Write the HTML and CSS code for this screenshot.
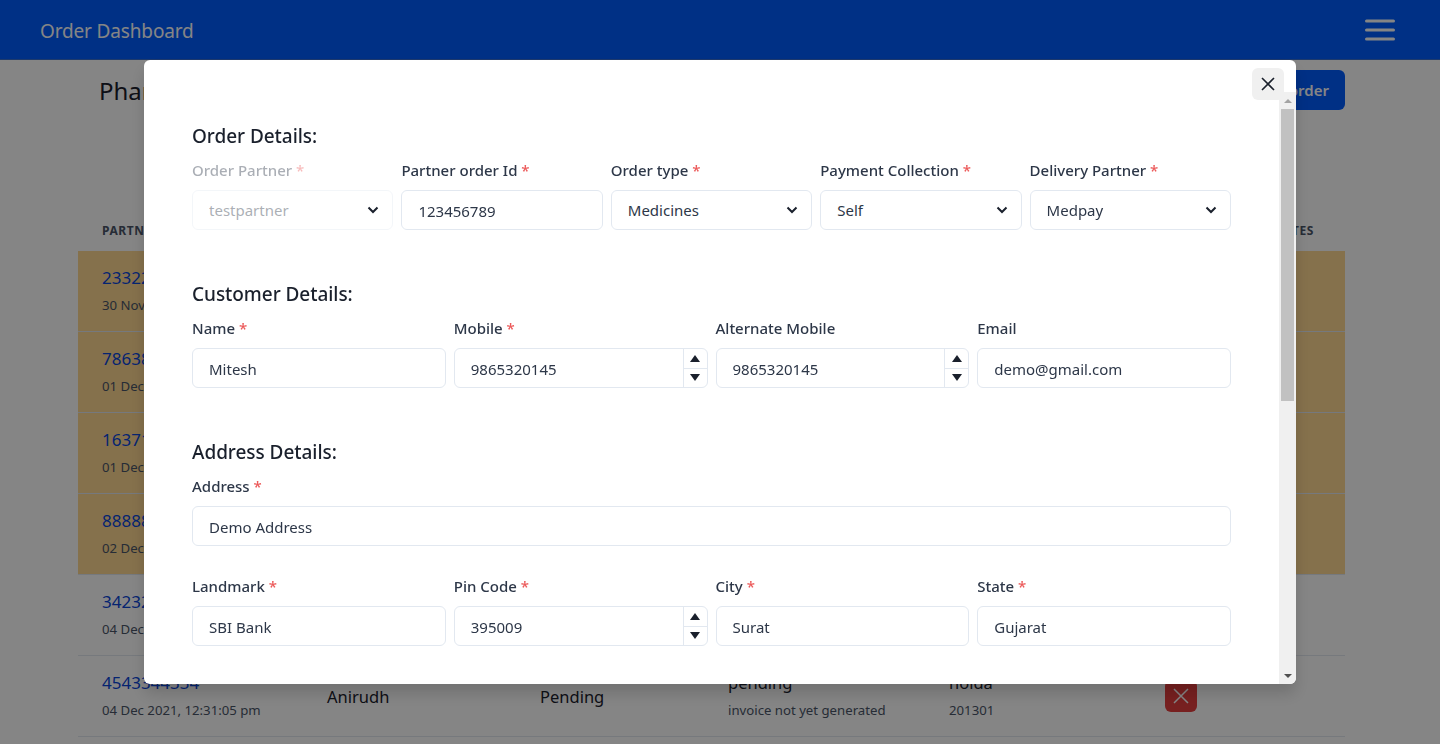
FILE: index.html
```html
<!DOCTYPE html>
<html>
<head>
<meta charset="utf-8">
<title>Order Dashboard</title>
<link rel="stylesheet" href="styles.css">
</head>
<body>
<header class="nav">
	<a class="brand">Order Dashboard</a>
	<svg class="burger" width="30" height="24" viewBox="0 0 30 24"><path d="M1.5 3h27M1.5 12h27M1.5 21h27" stroke="#fff" stroke-width="3" stroke-linecap="round"/></svg>
</header>
<main class="page">
	<div class="page-top">
		<h1>Pharmacy Orders</h1>
		<button class="create">Create order</button>
	</div>
	<div class="orders">
		<div class="row head"><span>PARTNER ORDER ID</span><span>CUSTOMER</span><span>STATUS</span><span>INVOICE</span><span>CITY</span><span>ACTION</span><span>UPDATES</span></div>
		<div class="row late"><div class="two"><a>2332211445</a><small>30 Nov 2021</small></div></div>
		<div class="row late"><div class="two"><a>7863812345</a><small>01 Dec 2021</small></div></div>
		<div class="row late"><div class="two"><a>1637100221</a><small>01 Dec 2021</small></div></div>
		<div class="row late"><div class="two"><a>8888812121</a><small>02 Dec 2021</small></div></div>
		<div class="row"><div class="two"><a>3423234234</a><small>04 Dec 2021</small></div></div>
		<div class="row">
			<div class="two"><a>4543344334</a><small>04 Dec 2021, 12:31:05 pm</small></div>
			<div><p>Anirudh</p></div>
			<div><p>Pending</p></div>
			<div class="two"><p>pending</p><small>invoice not yet generated</small></div>
			<div class="two"><p>noida</p><small>201301</small></div>
			<div><button class="cancel"><svg width="16" height="16" viewBox="0 0 16 16"><path d="M1 1l14 14M15 1L1 15" stroke="#fff" stroke-width="1.5"/></svg></button></div>
		</div>
	</div>
</main>
<div class="backdrop"></div>
<section class="modal">
	<button class="close"><svg width="14" height="14" viewBox="0 0 14 14"><path d="M1 1l12 12M13 1L1 13" stroke="#1a202c" stroke-width="1.6"/></svg></button>
	<div class="modal-body">
		<h2>Order Details:</h2>
		<div class="fields five">
			<div class="field off">
				<label>Order Partner <i>*</i></label>
				<div class="pick"><select disabled><option>testpartner</option></select><svg width="12" height="8" viewBox="0 0 12 8"><path d="M1.5 1.5L6 6l4.5-4.5" fill="none" stroke="#1a202c" stroke-width="2"/></svg></div>
			</div>
			<div class="field">
				<label>Partner order Id <i>*</i></label>
				<input type="text" value="123456789">
			</div>
			<div class="field">
				<label>Order type <i>*</i></label>
				<div class="pick"><select><option>Medicines</option></select><svg width="12" height="8" viewBox="0 0 12 8"><path d="M1.5 1.5L6 6l4.5-4.5" fill="none" stroke="#1a202c" stroke-width="2"/></svg></div>
			</div>
			<div class="field">
				<label>Payment Collection <i>*</i></label>
				<div class="pick"><select><option>Self</option></select><svg width="12" height="8" viewBox="0 0 12 8"><path d="M1.5 1.5L6 6l4.5-4.5" fill="none" stroke="#1a202c" stroke-width="2"/></svg></div>
			</div>
			<div class="field">
				<label>Delivery Partner <i>*</i></label>
				<div class="pick"><select><option>Medpay</option></select><svg width="12" height="8" viewBox="0 0 12 8"><path d="M1.5 1.5L6 6l4.5-4.5" fill="none" stroke="#1a202c" stroke-width="2"/></svg></div>
			</div>
		</div>

		<h2>Customer Details:</h2>
		<div class="fields four">
			<div class="field">
				<label>Name <i>*</i></label>
				<input type="text" value="Mitesh">
			</div>
			<div class="field">
				<label>Mobile <i>*</i></label>
				<div class="num"><input type="text" value="9865320145"><div class="steps"><b class="up"></b><b class="down"></b></div></div>
			</div>
			<div class="field">
				<label>Alternate Mobile</label>
				<div class="num"><input type="text" value="9865320145"><div class="steps"><b class="up"></b><b class="down"></b></div></div>
			</div>
			<div class="field">
				<label>Email</label>
				<input type="text" value="demo@gmail.com">
			</div>
		</div>

		<h2>Address Details:</h2>
		<div class="field wide">
			<label>Address <i>*</i></label>
			<input type="text" value="Demo Address">
		</div>
		<div class="fields four">
			<div class="field">
				<label>Landmark <i>*</i></label>
				<input type="text" value="SBI Bank">
			</div>
			<div class="field">
				<label>Pin Code <i>*</i></label>
				<div class="num"><input type="text" value="395009"><div class="steps"><b class="up"></b><b class="down"></b></div></div>
			</div>
			<div class="field">
				<label>City <i>*</i></label>
				<input type="text" value="Surat">
			</div>
			<div class="field">
				<label>State <i>*</i></label>
				<input type="text" value="Gujarat">
			</div>
		</div>
	</div>
	<div class="bar"><u class="arrow-up"></u><span class="thumb"></span><u class="arrow-down"></u></div>
</section>
</body>
</html>
```
FILE: styles.css
```css
*{box-sizing:border-box;margin:0;padding:0;}
html,body{height:744px;overflow:hidden;}
body{background:#fff;color:#1a202c;font-family:"Noto Sans","Open Sans",sans-serif;font-size:16px;}
button{font-family:inherit;border:0;}

.nav{height:60px;background:#005cff;display:flex;align-items:center;justify-content:space-between;padding:0 45px 0 40px;border-bottom:1px solid #3a6fd0;}
.brand{color:#fff;font-size:19px;letter-spacing:-.15px;margin-top:2px;}
.burger{display:block;}

.page{padding:10px 95px 0 78px;}
.page-top{display:flex;justify-content:space-between;align-items:center;height:40px;padding-left:21px;}
.page-top h1{font-size:24px;font-weight:400;}
.create{height:40px;padding:0 16px;background:#005cff;color:#fff;font-size:15px;font-weight:600;border-radius:6px;}

.orders{margin-top:101px;}
.row{display:grid;grid-template-columns:225px 213px 188px 221px 216px 92px 1fr;height:81px;padding:0 24px;border-bottom:1px solid #e2e8f0;align-items:center;}
.row a{display:block;color:#0a46d8;font-size:17px;line-height:27px;}
.row p{font-size:16.5px;line-height:27px;}
.row small{display:block;color:#4a5568;font-size:13.2px;line-height:20px;margin-top:4px;}
.two{margin-bottom:4px;}
.head{height:40px;font-size:12px;font-weight:700;letter-spacing:.6px;color:#4a5568;white-space:nowrap;align-items:start;padding-top:11px;border-bottom:0;}
.late{background:#ffd892;}
.cancel{width:32px;height:32px;background:#e53e3e;border-radius:6px;display:flex;align-items:center;justify-content:center;}

.backdrop{position:fixed;top:0;left:0;width:1440px;height:744px;background:rgba(0,0,0,.48);}

.modal{position:fixed;top:60px;left:144px;width:1152px;height:624px;background:#fff;border-radius:6px;overflow:hidden;box-shadow:0 10px 15px rgba(0,0,0,.15);}
.close{position:absolute;top:8px;right:12px;width:32px;height:32px;background:#f0f0f0;border-radius:6px;display:flex;align-items:center;justify-content:center;z-index:2;}
.modal-body{padding:64px 65px 0 48px;}
h2{font-size:19px;font-weight:500;line-height:24px;margin-bottom:10px;letter-spacing:-.05px;}

.fields{display:grid;gap:8px;}
.five{grid-template-columns:repeat(5,1fr);margin-bottom:52px;}
.four{grid-template-columns:repeat(4,1fr);margin-bottom:52px;}
.wide{margin-bottom:28px;}
.field label{display:block;font-size:15px;font-weight:500;line-height:24px;margin-bottom:8px;color:#2d3748;}
.field label i{color:#ec5a5a;font-style:normal;}
.off label,.off select{opacity:.4;}

input,select{width:100%;height:40px;border:1px solid #e2e8f0;border-radius:6px;padding:0 16px;background:#fff;color:#2d3748;font:15px "Noto Sans","Open Sans",sans-serif;appearance:none;outline:0;}
input{padding-top:2px;}
.pick{position:relative;}
.pick svg{position:absolute;right:14px;top:16px;}
.num{position:relative;}
.steps{position:absolute;top:1px;right:1px;bottom:1px;width:24px;border-left:1px solid #e2e8f0;display:flex;flex-direction:column;}
.steps b{flex:1;display:flex;align-items:center;justify-content:center;}
.steps b:first-child{border-bottom:1px solid #e2e8f0;}
.steps b:after{content:"";border-left:5.5px solid transparent;border-right:5.5px solid transparent;}
.up:after{border-bottom:7px solid #1a202c;}
.down:after{border-top:7px solid #1a202c;}

.bar{position:absolute;top:32px;right:0;bottom:0;width:17px;background:#f0f0f0;display:flex;flex-direction:column;align-items:center;}
.thumb{width:13px;height:292px;background:#c1c1c1;margin-top:6px;}
.arrow-up,.arrow-down{border-left:4px solid transparent;border-right:4px solid transparent;}
.arrow-up{border-bottom:4px solid #a3a3a3;margin-top:7px;}
.arrow-down{border-top:4px solid #505050;position:absolute;bottom:6px;}
```
